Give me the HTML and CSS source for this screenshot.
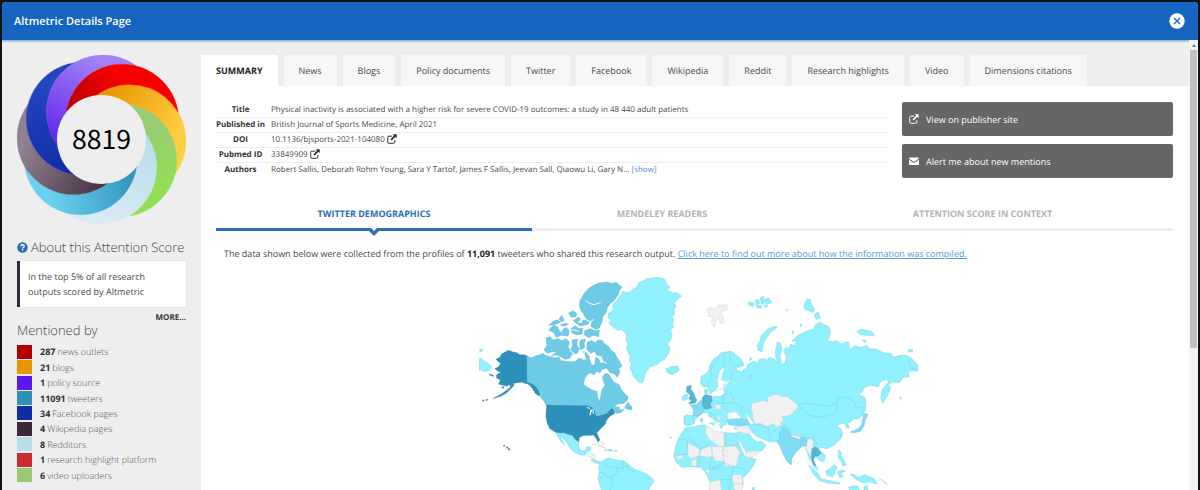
FILE: index.html
```html
<!DOCTYPE html>
<html lang="en">
<head>
<meta charset="utf-8">
<title>Altmetric Details Page</title>
<link rel="stylesheet" href="styles.css">
</head>
<body>
<svg class="defs" width="0" height="0" aria-hidden="true">
  <symbol id="external" viewBox="0 0 14 14">
    <path d="M7.5 3H2.8Q1 3 1 4.800V11.200Q1 13 2.800 13H9.200Q11 13 11 11.200V8.500" fill="none" stroke="currentColor" stroke-width="1.300"/>
    <path d="M8.200.5H13.500V5.800L11.700 4 6.600 9.100 4.900 7.400 10 2.300Z" fill="currentColor"/>
  </symbol>
  <symbol id="mail" viewBox="0 0 14 14">
    <path d="M0 3.200Q0 2 1.200 2H12.800Q14 2 14 3.200L8 7.800Q7 8.500 6 7.800L0 3.400Z" fill="currentColor"/>
    <path d="M0 4.900L5.500 9Q7 10 8.500 9L14 4.900V11.500Q14 12.500 13 12.500H1Q0 12.500 0 11.500Z" fill="currentColor"/>
  </symbol>
</svg>
<div class="modal">
  <header class="modal-header">
    <h1>Altmetric Details Page</h1>
    <button class="close" type="button" aria-label="Close">
      <svg viewBox="0 0 16 16"><circle cx="8" cy="8" r="7.700" fill="#fff"/><path d="M5 5L11 11M11 5L5 11" stroke="#1565c0" stroke-width="1.300"/></svg>
    </button>
  </header>
  <div class="modal-body">
    <aside class="sidebar">
      <svg class="donut" viewBox="-254 -254 508 508" role="img" aria-label="Attention score 8819">
        <defs>
          <path id="swirl" d="M225.900 93.600A170 170 0 1 0 -82.500 -34.200A170 170 0 0 1 225.900 93.600Z"/>
          <linearGradient id="g1" x1="0" y1="0" x2="1" y2=".4"><stop offset=".25" stop-color="#e89500"/><stop offset="1" stop-color="#ffce40"/></linearGradient>
          <linearGradient id="g2" x1="0" y1="0" x2="1" y2=".4"><stop offset=".4" stop-color="#98cc75"/><stop offset="1" stop-color="#92df54"/></linearGradient>
          <linearGradient id="g3" x1="0" y1="0" x2="1" y2=".4"><stop offset=".25" stop-color="#bbddeb"/><stop offset="1" stop-color="#d8eaf3"/></linearGradient>
          <linearGradient id="g4" x1="0" y1="0" x2="1" y2=".4"><stop offset=".2" stop-color="#2f90b9"/><stop offset="1" stop-color="#6bd0ef"/></linearGradient>
          <linearGradient id="g5" x1="0" y1="0" x2="1" y2=".4"><stop offset=".1" stop-color="#3c283b"/><stop offset="1" stop-color="#918291"/></linearGradient>
          <linearGradient id="g6" x1="0" y1="0" x2="1" y2=".4"><stop offset=".2" stop-color="#0f2ca6"/><stop offset="1" stop-color="#2345bd"/></linearGradient>
          <linearGradient id="g7" x1="0" y1="0" x2="1" y2=".4"><stop offset=".1" stop-color="#5a18ef"/><stop offset="1" stop-color="#a181f5"/></linearGradient>
          <linearGradient id="g8" x1="0" y1="0" x2="1" y2=".4"><stop offset=".2" stop-color="#b80000"/><stop offset=".7" stop-color="#f70000"/></linearGradient>
        </defs>
        <use href="#swirl" fill="url(#g1)" stroke="url(#g1)" transform="rotate(3)"/>
        <use href="#swirl" fill="url(#g2)" stroke="url(#g2)" transform="rotate(48)"/>
        <use href="#swirl" fill="url(#g3)" stroke="url(#g3)" transform="rotate(93)"/>
        <use href="#swirl" fill="url(#g4)" stroke="url(#g4)" transform="rotate(138)"/>
        <use href="#swirl" fill="url(#g5)" stroke="url(#g5)" transform="rotate(183)"/>
        <use href="#swirl" fill="url(#g6)" stroke="url(#g6)" transform="rotate(228)"/>
        <use href="#swirl" fill="url(#g7)" stroke="url(#g7)" transform="rotate(273)"/>
        <use href="#swirl" fill="url(#g8)" stroke="url(#g8)" transform="rotate(318)"/>
        <circle r="134" fill="#eee"/>
        <text class="score" y="29" text-anchor="middle">8819</text>
      </svg>
      <h2 class="about"><svg viewBox="0 0 12 12" aria-hidden="true"><circle cx="6" cy="6" r="5.700" fill="#2b70b5"/><path d="M4.200 4.500Q4.400 3 6 3Q7.900 3 7.900 4.500Q7.900 5.300 7 5.800Q6.100 6.200 6.100 7" fill="none" stroke="#fff" stroke-width="1.500"/><path d="M5.300 7.900h1.600v1.500h-1.600z" fill="#fff"/></svg>About this Attention Score</h2>
      <p class="callout">In the top 5% of all research outputs scored by Altmetric</p>
      <a class="more" href="#more">MORE...</a>
      <h2>Mentioned by</h2>
      <ul class="legend">
        <li class="news"><b>287</b> news outlets</li>
        <li class="blogs"><b>21</b> blogs</li>
        <li class="policy"><b>1</b> policy source</li>
        <li class="tweets"><b>11091</b> tweeters</li>
        <li class="facebook"><b>34</b> Facebook pages</li>
        <li class="wikipedia"><b>4</b> Wikipedia pages</li>
        <li class="reddit"><b>8</b> Redditors</li>
        <li class="highlight"><b>1</b> research highlight platform</li>
        <li class="video"><b>6</b> video uploaders</li>
      </ul>
    </aside>
    <main class="main">
      <nav class="tabs">
        <a class="active" href="#summary">SUMMARY</a>
        <a href="#news">News</a>
        <a href="#blogs">Blogs</a>
        <a href="#policy">Policy documents</a>
        <a href="#twitter">Twitter</a>
        <a href="#facebook">Facebook</a>
        <a href="#wikipedia">Wikipedia</a>
        <a href="#reddit">Reddit</a>
        <a href="#highlights">Research highlights</a>
        <a href="#video">Video</a>
        <a href="#dimensions">Dimensions citations</a>
      </nav>
      <div class="panel">
        <div class="overview">
          <table class="meta">
            <tbody>
              <tr><th scope="row">Title</th><td>Physical inactivity is associated with a higher risk for severe COVID-19 outcomes: a study in 48 440 adult patients</td></tr>
              <tr><th scope="row">Published in</th><td>British Journal of Sports Medicine, April 2021</td></tr>
              <tr><th scope="row">DOI</th><td>10.1136/bjsports-2021-104080 <svg class="ext"><use href="#external"/></svg></td></tr>
              <tr><th scope="row">Pubmed ID</th><td>33849909 <svg class="ext"><use href="#external"/></svg></td></tr>
              <tr><th scope="row">Authors</th><td>Robert Sallis, Deborah Rohm Young, Sara Y Tartof, James F Sallis, Jeevan Sall, Qiaowu Li, Gary N... <a href="#authors">[show]</a></td></tr>
            </tbody>
          </table>
          <div class="actions">
            <a href="#publisher"><svg><use href="#external"/></svg>View on publisher site</a>
            <a href="#alert"><svg><use href="#mail"/></svg>Alert me about new mentions</a>
          </div>
        </div>
        <nav class="sections">
          <a class="active" href="#demographics">TWITTER DEMOGRAPHICS<svg viewBox="0 0 16 10" aria-hidden="true"><path d="M0 0H16L8 8Z" fill="#2b70b5"/><path d="M4 -1H12L8 3Z" fill="#fff"/></svg></a>
          <a href="#readers">MENDELEY READERS</a>
          <a href="#context">ATTENTION SCORE IN CONTEXT</a>
        </nav>
        <p class="intro">The data shown below were collected from the profiles of <b>11,091</b> tweeters who shared this research output. <a href="#compiled">Click here to find out more about how the information was compiled.</a></p>
        <svg class="map" viewBox="1437 825 1320 648" role="img" aria-label="World map of tweeters">
          <g transform="translate(1410 810)">
            <g class="c-low">
              <path d="M415 130L424 124 430 118 428 108 432 100 440 92 446 82 454 74 460 62 470 68 480 66 488 58 500 52 506 38 518 34 530 26 545 25 560 22 574 24 584 28 588 36 590 42 600 52 592 60 606 68 620 68 634 78 624 88 612 98 618 108 612 120 614 132 606 140 612 150 607 160 610 172 602 180 606 196 602 210 592 222 600 232 596 250 584 268 572 274 560 284 540 290 526 310 522 328 516 340 506 336 498 328 490 318 486 306 480 294 484 282 478 270 482 260 474 248 470 236 474 222 468 210 470 194 456 178 442 180 430 172 416 160 424 150 414 144Z"/>
              <path d="M587 293L595 296 600 290 612 291 622 289 627 299 620 307 606 313 592 308Z"/>
              <path d="M28 266L34 265 44 274 54 280 66 290 58 296 56 303 40 304 34 298 28 302ZM29 239L37 238 38 243 30 245Z"/>
              <path d="M256 488L284 489 296 494 306 500 318 512 327 516 325 530 334 543 346 542 350 531 363 530 359 543 352 547 344 556 330 554 312 546 300 534 292 520 280 506 270 494 274 508 284 524 276 518 266 504Z"/>
              <path d="M362 570L374 568 382 574 392 576 400 572 408 566 418 564 430 568 446 571 460 572 474 582 490 596 510 604 530 612 548 626 551 636 540 650 536 664 396 664 388 640 384 624 388 606 386 590 390 580 378 580Z"/>
              <path d="M412 538L424 538 428 543 416 543ZM434 541L440 541 440 544 434 544Z"/>
            </g>
            <g class="c-none">
              <path d="M366 523L384 520 398 528 408 535 396 532 380 526ZM356 550L376 552 374 568 362 564 350 558ZM392 514L400 518 404 524 396 520ZM404 538L412 538 412 544 404 543Z"/>
            </g>
            <path class="edge" d="M410 566L406 584 420 592 440 594 442 610 424 620 430 640 420 660M440 594L460 592 476 588M388 606L404 610 414 624 424 620M384 626L398 622 404 610M460 574L458 590M474 584L472 598 490 598"/>
            <g class="c-mid">
              <path d="M170 257L184 264 196 258 206 256 218 250 226 256 240 260 256 264 268 262 272 272 288 274 300 276 316 274 328 264 340 270 352 262 360 270 364 284 374 286 377 262 386 266 391 280 400 278 412 284 406 296 396 298 390 308 380 304 372 314 360 308 350 316 344 326 340 342 352 352 366 360 380 364 384 386 390 392 393 374 396 358 405 346 399 330 398 318 408 310 418 314 424 326 434 338 448 344 452 356 462 368 474 380 472 390 462 400 442 402 432 414 446 410 450 420 462 418 452 428 438 430 432 418 418 424 412 430 398 436 384 442 376 436 372 424 360 414 352 408 230 408 222 394 212 382 202 366 190 350 170 340Z"/>
              <path d="M474 396L478 404 486 410 486 419 474 418 464 414Z"/>
              <path d="M352 216L366 212 376 218 384 210 398 212 404 222 414 228 424 242 434 248 438 258 450 276 456 288 446 296 450 306 442 322 434 312 420 308 408 292 412 280 400 272 396 258 380 256 374 244 362 250 350 238Z"/>
              <path d="M228 204L240 200 250 210 264 206 276 212 288 206 298 216 294 230 300 240 308 248 300 264 286 268 272 260 258 254 244 258 262 244 244 246 232 250 222 240 231 226Z"/>
              <path d="M306 210L324 208 320 224 328 236 322 250 310 252 302 240 308 228ZM331 210L347 208 342 222 345 232 332 240 328 224ZM340 244L350 248 360 264 346 262Z"/>
              <path d="M330 92L344 68 360 52 384 40 410 36 424 40 440 38 456 52 448 62 444 76 432 92 422 100 412 112 408 130 398 140 396 156 388 174 376 178 362 168 366 156 348 146 340 130 334 124 328 108Z"/>
              <path d="M344 182L362 176 374 182 388 180 386 200 370 196 356 203 344 196ZM304 174L316 168 326 176 338 174 336 192 318 194 306 188ZM236 180L250 166 262 170 270 186 288 172 298 182 294 198 274 196 258 202 252 188ZM236 166L250 154 266 148 276 136 282 152 268 158 254 164ZM296 130L308 122 320 130 318 140 304 142ZM310 152L324 142 332 146 322 158 336 160 340 150 358 152 356 162 330 168ZM270 166L284 160 296 162 284 168Z"/>
            </g>
            <path class="cut" d="M346 92L358 100 372 104 392 98M346 270L342 250 348 238M300 242L312 250 308 266M324 212L328 232M262 146L272 154M270 172L276 188M306 178L326 184M350 150L360 156 372 148"/>
            <g class="c-high">
              <path d="M170 257L160 254 150 255 140 248 128 246 115 241 105 247 95 252 90 262 78 268 86 276 92 280 86 290 75 296 84 304 94 306 80 314 80 324 92 330 86 342 100 346 112 348 118 342 122 352 108 362 98 370 84 378 70 385 92 379 110 368 124 355 132 346 130 340 140 338 156 336 165 340 176 338 190 344 200 354 209 372 206 377 196 370 188 356 178 344 170 340ZM57 312L70 316 70 319 60 316ZM36 391L42 390 40 394ZM46 390L54 388 52 391ZM94 352L102 350 100 355Z"/>
              <path d="M230 406L352 408 368 414 360 420 360 440 366 424 372 420 378 440 398 436 412 430 424 416 431 420 434 430 420 438 408 452 406 462 394 474 380 488 389 510 384 516 376 500 370 495 356 496 342 496 328 502 326 514 318 510 306 496 292 492 284 488 268 488 256 486 240 476 232 460 228 440Z"/>
              <path d="M101 526L104 526 104 529 101 529ZM109 531L113 531 113 534 109 534ZM115 534L120 537 118 541 114 538Z"/>
            </g>
            <path class="cut" d="M350 413L360 415M362 422L360 436M369 420L370 432"/>
          </g>
          <g transform="translate(2010 810)">
            <g class="c-low">
              <path d="M182 262L200 270 218 276 222 286 208 292 196 292 204 302 218 306 222 298 230 296 232 284 250 274 262 280 268 268 284 266 290 270 300 262 316 270 326 282 318 264 316 244 322 216 332 220 336 236 330 260 334 276 342 284 350 262 340 240 350 232 356 238 362 222 376 228 378 212 366 214 384 196 410 184 430 178 436 164 450 156 458 162 474 168 482 182 478 202 472 212 486 216 500 212 514 222 520 218 536 216 540 240 556 226 568 232 580 230 588 226 600 236 620 238 640 248 662 250 672 262 690 256 710 256 726 266 744 286 742 304 722 302 714 310 718 320 700 322 688 338 670 336 656 342 662 356 652 378 638 400 632 384 636 360 656 336 648 328 630 336 626 350 600 346 584 352 576 366 566 374 584 382 588 396 586 420 576 438 562 448 552 446 540 458 530 456 536 466 538 474 530 474 524 460 508 462 502 470 512 476 518 490 510 508 492 526 470 536 452 532 444 538 466 556 462 574 448 572 442 562 430 560 428 576 440 590 444 600 434 594 424 574 416 562 412 546 402 526 394 530 376 548 364 566 364 584 352 574 340 552 332 530 320 514 300 516 282 508 262 500 246 486 236 470 228 456 210 448 204 430 196 422 188 432 178 424 172 436 174 452 168 464 156 466 146 456 134 444 122 434 112 428 98 428 90 436 76 448 72 462 50 468 42 462 42 440 48 434 70 438 72 420 62 406 80 404 92 392 104 374 110 378 130 380 156 378 164 368 160 352 172 344 180 330 190 300Z"/>
              <path d="M92 330L94 318 106 314 116 300 120 284 130 268 146 256 154 248 166 246 184 244 200 256 214 268 218 280 206 288 190 282 186 300 184 324 170 334 154 330 150 318 164 300 160 292 152 298 144 316 140 336 144 348 132 364 120 372 114 350 100 350 92 342ZM104 360L112 358 114 370 104 374Z"/>
              <path d="M38 378L52 372 52 388 38 392ZM0 293L12 290 22 290 26 300 14 308 0 312Z"/>
              <path d="M196 490L206 486 220 488 240 494 250 508 262 516 274 514 288 526 276 542 252 546 230 548 218 526 206 508Z"/>
              <path d="M46 474L70 470 104 464 112 472 140 486 166 488 196 490 204 512 214 540 226 560 258 568 250 588 232 610 218 624 220 645 194 664 118 664 122 640 106 606 92 592 60 590 36 592 18 576 12 560 16 530 24 508 34 490Z"/>
              <path d="M316 168L322 172 302 186 290 202 280 220 276 246 264 240 262 228 270 214 274 196 292 178ZM402 104L412 86 422 90 424 104 434 116 430 128 418 122 402 116ZM432 134L444 126 452 144 438 148ZM560 184L576 178 604 184 614 196 594 196 570 194ZM576 210L588 212 586 218ZM714 240L728 238 728 244 716 246Z"/>
              <path d="M234 98L246 96 254 102 250 110 238 106ZM254 92L264 88 270 100 260 106ZM270 84L280 78 282 90 296 84 306 98 292 102 284 98 276 104ZM258 108L272 106 276 114 262 114ZM280 106L292 104 290 112Z"/>
              <path d="M416 584L430 596 446 612 452 626 480 632 508 638 510 642 478 640 448 632 432 614ZM466 604L480 596 492 584 502 592 494 608 488 620 472 616ZM504 604L518 600 526 604 512 608 520 618 510 624 506 614ZM506 540L514 546 512 558 522 568 528 586 518 588 512 572 504 562ZM540 612L554 614 566 622 584 614 612 626 622 642 600 636 578 638 558 628ZM536 652L546 648 564 648 568 664 540 664ZM582 650L592 646 594 664 582 664ZM246 654L254 652 254 664 248 664ZM512 492L516 490 514 504ZM118 430L134 436 146 450 140 458 128 444 114 438ZM92 444L98 444 98 456 92 456ZM118 460L134 458 132 466ZM148 464L158 468 154 476ZM192 474L200 472 198 478ZM0 500L4 502 2 506Z"/>
              <path d="M240 262L246 266 240 272ZM348 118L352 120 350 124ZM366 182L371 184 368 192ZM390 162L396 164 392 170ZM690 380L694 384 692 388Z"/>
            </g>
            <g class="c-none">
              <path d="M246 400L262 396 280 392 294 396 294 380 320 372 336 380 352 380 366 392 386 408 374 422 360 436 336 440 340 450 330 462 342 462 322 470 308 462 290 470 272 460 254 462 250 446 248 430 244 416Z"/>
              <path d="M110 466L124 474 140 486 164 486 164 528 150 530 118 508 106 490ZM160 530L196 528 210 546 204 566 198 590 166 588 160 560ZM126 530L158 530 160 572 136 574 126 552ZM94 540L122 526 128 556 118 562 88 558ZM54 518L88 538 88 556 64 566 52 556ZM186 614L214 614 218 640 190 642ZM118 636L150 630 156 664 118 664ZM16 560L34 556 40 566 22 568ZM64 572L80 566 80 588 66 588ZM106 600L118 598 118 614ZM190 642L218 640 216 664 194 664Z"/>
              <path d="M202 470L226 466 236 474 244 490 220 490 202 484ZM226 546L262 542 266 552 240 562 232 564ZM360 492L392 498 390 508 366 502ZM410 514L420 504 430 514 428 530 436 548 424 560 410 540 404 530ZM136 404L152 404 150 418 136 416ZM150 344L166 342 168 354 152 354ZM140 436L150 440 152 452 142 444ZM160 540L172 544 176 560 160 556Z"/>
              <path d="M112 118L124 112 134 118 146 104 156 106 170 104 172 118 160 122 152 128 158 138 162 158 150 160 146 142 138 150 134 170 124 162 128 140 116 138ZM628 624L642 632 654 644 640 638Z"/>
            </g>
            <g class="c-soft">
              <path d="M338 472L352 478 362 500 390 510 404 506 412 514 402 526 394 530 376 548 364 566 364 584 352 574 340 552 332 530 320 514 330 504 328 492Z"/>
              <path d="M62 406L80 404 92 392 102 404 98 428 90 436 70 438 72 420ZM172 450L190 444 214 446 238 452 236 464 206 468 176 464ZM582 430L594 434 586 448 582 468 572 484 552 488 540 486 562 478 574 466ZM394 504L408 504 410 528 400 524Z"/>
            </g>
            <g class="c-warm">
              <path d="M50 350L64 346 62 358 70 368 76 382 80 390 76 399 56 402 64 392 56 386 62 376 50 366ZM98 382L108 374 124 378 126 394 120 402 124 414 104 418 98 404ZM426 536L438 530 454 548 444 558 434 558 430 570 438 588 430 584 424 560Z"/>
            </g>
            <path class="edge" d="M386 404L404 400 430 402 450 406 476 410 500 398 504 386 520 380 540 388 558 400 554 416 576 412 580 438M386 404L400 420 418 436 450 442 480 436 502 422 500 398M150 258L134 280 124 296 122 330 116 344M166 248L160 272 162 292M180 248L182 266 178 280M160 376L158 400 136 402M158 400L190 398 214 408 216 426M158 378L182 366 190 386 190 398M126 392L158 400M160 410L174 428M294 470L300 498 294 514M300 490L322 476 342 464M342 464L360 480 362 494 410 504 428 502 442 526M236 466L256 462 274 466 294 474M718 268L720 290 740 302M162 488L164 526 204 526M34 508L52 510 54 552 16 554M54 500L90 536 120 524M88 558L84 590M122 562L118 596 140 590 160 578 190 590 184 624 176 660M188 590L216 594 232 610M120 600L154 590M150 630L180 628M244 312L240 330M66 436L70 456"/>
            <g class="cut-fill">
              <path d="M172 430L190 426 204 432 214 444 190 446 174 448ZM228 428L240 444 252 462 242 464 232 448ZM150 300L164 294 158 310 154 330 176 336 162 342 158 356 136 364 146 350 142 330Z"/>
            </g>
          </g>
        </svg>
      </div>
    </main>
    <div class="scrollbar" aria-hidden="true"><span class="arrow"></span><span class="thumb"></span></div>
  </div>
</div>
</body>
</html>
```
FILE: styles.css
```css
* { box-sizing: border-box; }
body {
  margin: 0;
  padding: 2px 2px 0;
  background: #111;
  font-family: "Open Sans", sans-serif;
  font-size: 9px;
  color: #4a4a4a;
  text-rendering: geometricPrecision;
}
h1, h2, p, ul { margin: 0; padding: 0; }
a { color: inherit; text-decoration: none; }
.defs { position: absolute; }
.modal {
  display: flex;
  flex-direction: column;
  min-height: calc(100vh - 2px);
  background: #eee;
  border-radius: 4px 4px 0 0;
  overflow: hidden;
}
.modal-header {
  display: flex;
  align-items: center;
  justify-content: space-between;
  height: 38px;
  padding: 0 13px 0 12px;
  background: #1565c0;
  color: #fff;
  box-shadow: 0 1px 2px rgba(21, 101, 192, .6);
}
h1 { font-size: 11px; font-weight: 600; }
.close { width: 16px; height: 16px; padding: 0; border: 0; background: none; }
.close svg { display: block; }
.modal-body { display: flex; flex: 1; }

.sidebar { flex: 0 0 199px; display: flex; flex-direction: column; padding: 15px 15px 8px; }
.donut { display: block; width: 169px; height: 169px; }
.score { font-family: "Noto Sans CJK SC", "Open Sans", sans-serif; font-size: 80px; fill: #000; }
h2 { font-size: 13px; font-weight: 300; line-height: 18px; color: #444; white-space: nowrap; }
.about { display: flex; align-items: center; gap: 3px; margin-top: 14px; }
.about svg { width: 11px; height: 11px; }
.callout {
  margin-top: 5px;
  padding: 8px 20px 8px 8px;
  border-left: 3px solid #2d2f3f;
  background: #fff;
  line-height: 15px;
  box-shadow: 0 0 2px rgba(0, 0, 0, .1);
}
.more { display: block; margin-top: 5px; font-size: 8px; font-weight: 700; line-height: 12px; text-align: right; color: #333; }
.sidebar .more + h2 { margin-top: -3px; }
.legend { flex: 1; display: flex; flex-direction: column; margin-top: 5px; list-style: none; font-weight: 300; color: #555; }
.legend li { flex: 1; display: flex; align-items: center; gap: 2px; line-height: 15px; white-space: nowrap; }
.legend li::before { content: ""; width: 15px; height: 14px; margin-right: 6px; background: var(--c); }
.legend b { font-weight: 700; color: #333; }
.news { --c: #b60000; }
.blogs { --c: #e89500; }
.policy { --c: #5a18ef; }
.tweets { --c: #2f90b9; }
.facebook { --c: #0f2ca6; }
.wikipedia { --c: #3c283b; }
.reddit { --c: #b9ddeb; }
.highlight { --c: #cb2d2d; }
.video { --c: #98c973; }

.main { flex: 1; min-width: 0; display: flex; flex-direction: column; padding-top: 15px; }
.tabs { display: flex; gap: 6px; }
.tabs a { padding: 0 15px; line-height: 31px; background: #f7f7f7; white-space: nowrap; }
.tabs .active { background: #fff; font-weight: 700; color: #222; }
.panel { flex: 1; padding: 16px 16px 0 15px; background: #fff; }
.overview { display: flex; align-items: flex-start; gap: 15px; }
.meta { flex: 1; margin-top: 1px; border-collapse: collapse; font-size: 8px; line-height: 14px; }
.meta th, .meta td { padding: 0; border-bottom: 1px solid #eee; white-space: nowrap; }
.meta tr:last-child > * { border-bottom: 0; }
.meta th { width: 47px; font-weight: 700; color: #333; }
.meta td { width: auto; padding-left: 6px; text-align: left; }
.meta a { color: #5b8fd6; }
.ext { width: 10px; height: 10px; vertical-align: -2px; color: #222; }
.actions { flex: 0 0 271px; display: grid; gap: 8px; }
.actions a { display: flex; align-items: center; gap: 7px; height: 34px; padding: 0 7px; border-radius: 2px; background: #666; color: #fff; }
.actions svg { width: 10px; height: 10px; }
.sections { display: grid; grid-template-columns: 316fr 260fr 381fr; margin-top: 28px; }
.sections a { position: relative; padding-bottom: 6px; border-bottom: 3px solid #eee; font-weight: 700; line-height: 16px; text-align: center; color: #b3b3b3; }
.sections .active { border-color: #2b70b5; color: #2b70b5; }
.sections svg { position: absolute; left: calc(50% - 8px); top: 100%; width: 16px; height: 10px; }
.intro { padding: 15px 8px 0; line-height: 16px; white-space: nowrap; }
.intro b { color: #222; }
.intro a { color: #5b9bd5; text-decoration: underline; }
.map { display: block; width: 440px; height: 216px; margin: 13px auto 0 263px; }
.map g { stroke-width: 1.500; stroke-linejoin: round; }
.c-low { fill: #91f0fd; stroke: #78d3e4; }
.c-soft { fill: #80dcf3; stroke: #6bc6dc; }
.c-mid { fill: #6ecbe5; stroke: #5cb8d3; }
.c-warm { fill: #55b7d6; stroke: #459fbd; }
.c-high { fill: #2d90ba; stroke: #297fa5; }
.c-none { fill: #f1f1f1; stroke: #d2d2d2; }
.edge { fill: none; stroke: #77cfdf; }
.cut { fill: none; stroke: #fff; stroke-width: 3; }
.cut-fill { fill: #fff; stroke: #a8dfe8; }

.scrollbar { flex: 0 0 9px; display: flex; flex-direction: column; align-items: center; background: #f3f3f3; }
.arrow { margin: 4px 0 3px; border: 2px solid transparent; border-top: 0; border-bottom: 3px solid #777; }
.thumb { width: 7px; height: 298px; background: #c1c1c1; }
```
